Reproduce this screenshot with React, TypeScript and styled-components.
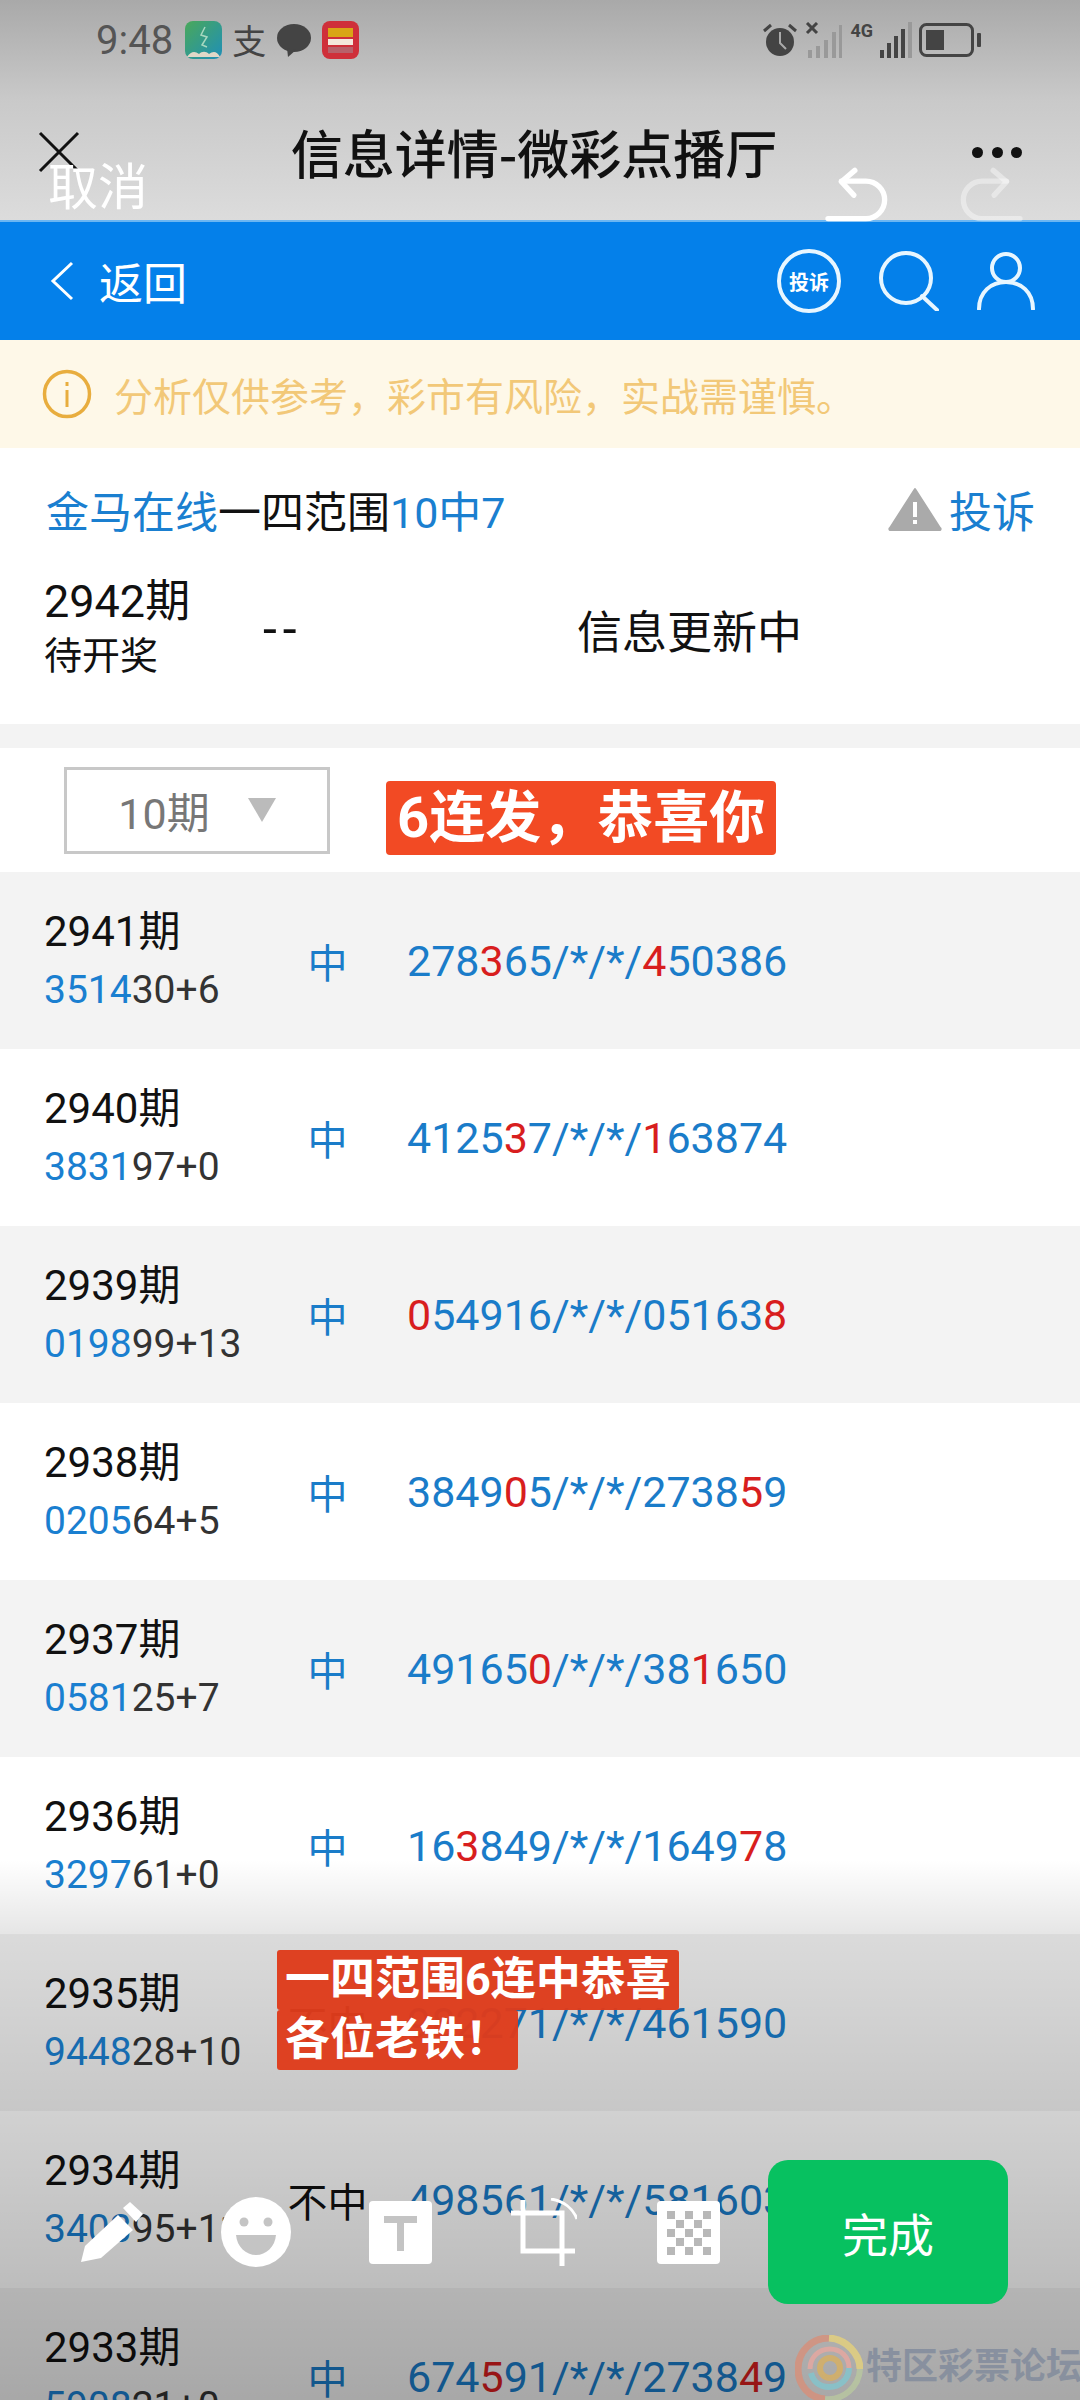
import React from 'react';
import styled, { createGlobalStyle } from 'styled-components';

const cjk = '"Noto Sans CJK SC", sans-serif';
const mixed = 'Roboto, "Noto Sans CJK SC", sans-serif';

const GlobalStyle = createGlobalStyle`
  html, body {
    margin: 0;
    padding: 0;
    width: 1080px;
    height: 2400px;
    overflow: hidden;
    background: #fff;
  }
  * { box-sizing: border-box; }
`;

const Page = styled.div`
  position: relative;
  width: 1080px;
  height: 2400px;
  overflow: hidden;
  font-family: ${mixed};
  color: #111;
`;

const TopBar = styled.div`
  height: 220px;
  background: linear-gradient(#a9a9a9, #c9c9c9 45%, #dcdcdc);
`;

const StatusBar = styled.div`
  height: 80px;
  padding: 0 97px 0 96px;
  display: flex;
  align-items: center;
  justify-content: space-between;
`;

const StatusGroup = styled.div<{ $gap: number }>`
  display: flex;
  align-items: center;
  gap: ${(p) => p.$gap}px;
`;

const Time = styled.span`
  font-family: Roboto, sans-serif;
  font-size: 40px;
  color: #555;
  margin-right: 2px;
`;

const PayGlyph = styled.span`
  font-family: ${cjk};
  font-size: 34px;
  color: #444;
  line-height: 40px;
`;

const FourG = styled.div`
  display: flex;
  flex-direction: column;
  font-family: Roboto, sans-serif;
  font-size: 18px;
  font-weight: 700;
  line-height: 20px;
  color: #444;
  height: 38px;
`;

const TitleRow = styled.div`
  height: 84px;
  margin-top: 30px;
  padding: 0 58px 0 38px;
  display: grid;
  grid-template-columns: 58px 1fr 50px;
  align-items: center;
`;

const PageTitle = styled.div`
  text-align: center;
  font-family: ${cjk};
  font-size: 52px;
  font-weight: 500;
  line-height: 84px;
  color: #111;
  white-space: nowrap;
`;

const Dots = styled.div`
  display: flex;
  justify-content: space-between;
  span {
    width: 11px;
    height: 11px;
    border-radius: 50%;
    background: #111;
  }
`;

const NavBar = styled.div`
  height: 120px;
  background: #0480ea;
  border-top: 2px solid #6cb6f2;
  display: flex;
  align-items: center;
  padding: 0 45px 0 50px;
  color: #fff;
`;

const BackLabel = styled.span`
  font-family: ${cjk};
  font-size: 44px;
  margin-left: 25px;
`;

const NavIcons = styled.div`
  margin-left: auto;
  display: flex;
  align-items: center;
  gap: 38px;
`;

const ComplainRound = styled.div`
  width: 64px;
  height: 64px;
  border: 4px solid #e8f6ff;
  border-radius: 50%;
  display: flex;
  align-items: center;
  justify-content: center;
  font-family: ${cjk};
  font-size: 20px;
  font-weight: 700;
  white-space: nowrap;
`;

const Notice = styled.div`
  height: 108px;
  background: #fef8e8;
  padding-left: 42px;
  display: flex;
  align-items: center;
  gap: 22px;
  font-family: ${cjk};
  font-size: 39px;
  color: #f2c878;
`;

const InfoHead = styled.div`
  height: 122px;
  padding: 0 45px 0 46px;
  display: flex;
  align-items: center;
  justify-content: space-between;
  font-size: 43px;
`;

const Blue = styled.span`
  color: #1a7fd0;
`;

const Red = styled.span`
  color: #d81e1e;
`;

const Report = styled.div`
  display: flex;
  align-items: center;
  gap: 7px;
  color: #1a7fd0;
`;

const CurrentRow = styled.div`
  height: 154px;
  padding: 0 0 36px 44px;
  display: grid;
  grid-template-columns: 219px 314px auto;
  align-items: center;
  justify-content: start;
`;

const Issue = styled.div<{ $size: number }>`
  font-size: ${(p) => p.$size}px;
  line-height: 54px;
  white-space: nowrap;
`;

const Dash = styled.div`
  font-size: 50px;
  letter-spacing: 6px;
`;

const Pending = styled.div`
  font-family: ${cjk};
  font-size: 45px;
`;

const SelectRow = styled.div`
  height: 148px;
  border-top: 24px solid #f3f3f3;
  padding: 0 0 0 64px;
  display: flex;
  align-items: center;
  gap: 56px;
`;

const SelectBox = styled.div`
  width: 266px;
  height: 87px;
  border: 3px solid #c8c8c8;
  display: flex;
  align-items: center;
  justify-content: center;
  gap: 38px;
  font-size: 43px;
  color: #777;
`;

const Caret = styled.span`
  width: 0;
  height: 0;
  border-left: 14px solid transparent;
  border-right: 14px solid transparent;
  border-top: 24px solid #bbb;
`;

const StreakBadge = styled.div`
  height: 74px;
  margin-top: 16px;
  padding: 0 11px;
  background: #f24a24;
  border-radius: 4px;
  color: #fff;
  font-size: 56px;
  font-weight: 700;
  line-height: 74px;
  white-space: nowrap;
`;

const Row = styled.div<{ $shaded: boolean }>`
  height: 177px;
  padding-left: 44px;
  display: grid;
  grid-template-columns: 221px 125px 1fr;
  align-items: center;
  background: ${(p) => (p.$shaded ? '#f3f3f3' : '#fff')};
`;

const Period = styled.div`
  line-height: 58px;
  white-space: nowrap;
`;

const PeriodName = styled.div`
  font-size: 42px;
  color: #111;
`;

const Draw = styled.div`
  font-size: 39px;
  color: #333;
`;

const Verdict = styled.div<{ $hit: boolean }>`
  text-align: center;
  font-family: ${cjk};
  font-size: 40px;
  color: ${(p) => (p.$hit ? '#1a7cc9' : '#111')};
`;

const Numbers = styled.div`
  padding-left: 17px;
  font-size: 43px;
  color: #1a7cc9;
  white-space: nowrap;
`;

const BottomShade = styled.div`
  position: absolute;
  left: 0;
  right: 0;
  top: 1860px;
  bottom: 0;
  background: linear-gradient(rgba(0, 0, 0, 0), rgba(0, 0, 0, 0.1) 14%, rgba(0, 0, 0, 0.31));
`;

const EditorTop = styled.div`
  position: absolute;
  top: 155px;
  left: 48px;
  right: 55px;
  display: flex;
  align-items: center;
  gap: 68px;
`;

const Cancel = styled.span`
  margin-right: auto;
  margin-bottom: 22px;
  font-family: ${cjk};
  font-size: 50px;
  line-height: 57px;
  color: #fff;
`;

const Sticker = styled.div`
  position: absolute;
  left: 277px;
  top: 1950px;
  display: flex;
  flex-direction: column;
  align-items: flex-start;
`;

const StickerLine = styled.div`
  padding: 0 8px;
  background: rgba(222, 60, 28, 0.97);
  color: #fff;
  font-size: 45px;
  font-weight: 700;
  line-height: 60px;
  border-radius: 3px;
  white-space: nowrap;
`;

const EditorBar = styled.div`
  position: absolute;
  left: 40px;
  top: 2160px;
  display: flex;
  align-items: center;
`;

const ToolSlot = styled.div`
  width: 144px;
  display: flex;
  justify-content: center;
`;

const DoneButton = styled.div`
  margin-left: 8px;
  width: 240px;
  height: 144px;
  border-radius: 20px;
  background: #07c160;
  color: #fff;
  display: flex;
  align-items: center;
  justify-content: center;
  font-family: ${cjk};
  font-size: 46px;
`;

const Watermark = styled.div`
  position: absolute;
  left: 795px;
  top: 2335px;
  display: flex;
  align-items: center;
  gap: 3px;
  opacity: 0.8;
`;

const WatermarkText = styled.span`
  margin-top: -10px;
  font-family: ${cjk};
  font-size: 36px;
  font-weight: 700;
  color: #808a9c;
  white-space: nowrap;
`;

type RowData = { name: string; head: string; tail: string; hit: boolean; nums: string };

// [x] marks a digit that is shown in red
const rows: RowData[] = [
  { name: '2941期', head: '3514', tail: '30+6', hit: true, nums: '278[3]65/*/*/[4]50386' },
  { name: '2940期', head: '3831', tail: '97+0', hit: true, nums: '4125[3]7/*/*/[1]63874' },
  { name: '2939期', head: '0198', tail: '99+13', hit: true, nums: '[0]54916/*/*/05163[8]' },
  { name: '2938期', head: '0205', tail: '64+5', hit: true, nums: '3849[0]5/*/*/2738[5]9' },
  { name: '2937期', head: '0581', tail: '25+7', hit: true, nums: '49165[0]/*/*/38[1]650' },
  { name: '2936期', head: '3297', tail: '61+0', hit: true, nums: '16[3]849/*/*/1649[7]8' },
  { name: '2935期', head: '9448', tail: '28+10', hit: false, nums: '982271/*/*/461590' },
  { name: '2934期', head: '3403', tail: '95+11', hit: false, nums: '498561/*/*/581603' },
  { name: '2933期', head: '5908', tail: '21+0', hit: true, nums: '674[5]91/*/*/2738[4]9' },
];

const NumberText = ({ value }: { value: string }) => (
  <>
    {value.split(/(\[.\])/).map((part, i) =>
      part.startsWith('[') ? <Red key={i}>{part[1]}</Red> : <span key={i}>{part}</span>
    )}
  </>
);

const SignalBars = ({ dark, width }: { dark: number; width: number }) => (
  <svg width={width} height="36" viewBox={`0 0 ${width} 36`}>
    {[0, 1, 2, 3, 4].map((i) => (
      <rect
        key={i}
        x={i * 7}
        y={28 - i * 7}
        width="4"
        height={8 + i * 7}
        fill={i < dark ? '#444' : '#999'}
      />
    ))}
  </svg>
);

const UndoIcon = ({ color, flip }: { color: string; flip?: boolean }) => (
  <svg width="67" height="57" viewBox="190 105 200 170">
    <g
      fill="none"
      stroke={color}
      strokeWidth="16"
      strokeLinecap="round"
      strokeLinejoin="round"
      transform={flip ? 'matrix(-1 0 0 1 580 0)' : undefined}
    >
      <path d="M285 118L245 152L282 192" />
      <path d="M245 150H318A56 56 0 0 1 318 262H205" />
    </g>
  </svg>
);

const checkerCells = [0, 1, 2, 3, 4].flatMap((r) =>
  [0, 1, 2, 3, 4].filter((c) => (r + c) % 2 === 0).map((c) => ({ r, c }))
);

const PenTool = () => (
  <svg width="66" height="64" viewBox="0 0 66 64">
    <path d="M2 62L6 46L39 15L54 30L22 58Z" fill="#fff" />
    <path d="M44 8L51 2L64 14L57 22Z" fill="#fff" />
  </svg>
);

const SmileTool = () => (
  <svg width="70" height="70" viewBox="0 0 70 70">
    <circle cx="35" cy="35" r="35" fill="#fff" />
    <circle cx="23" cy="25" r="4.5" fill="#c4c4c4" />
    <circle cx="47" cy="25" r="4.5" fill="#c4c4c4" />
    <path d="M15 38H55C54 50 45 58 35 58C25 58 16 50 15 38Z" fill="#c4c4c4" />
  </svg>
);

const TextTool = () => (
  <svg width="63" height="63" viewBox="0 0 63 63">
    <rect width="63" height="63" rx="4" fill="#fff" />
    <path d="M15 15H48V22H35V50H28V22H15Z" fill="#c4c4c4" />
  </svg>
);

const CropTool = () => (
  <svg width="66" height="68" viewBox="0 0 66 68">
    <g fill="none" stroke="#fff" strokeWidth="5">
      <path d="M0 15H51V68" />
      <path d="M12 2V53H64" />
      <path d="M40 1C52 3 62 10 66 21" strokeWidth="3" />
    </g>
  </svg>
);

const MosaicTool = () => (
  <svg width="63" height="63" viewBox="0 0 63 63">
    <rect width="63" height="63" rx="4" fill="#fff" />
    {checkerCells.map(({ r, c }) => (
      <rect key={`${r}-${c}`} x={10 + c * 9} y={10 + r * 9} width="8" height="8" fill="#b8b8b8" />
    ))}
  </svg>
);

const Swirl = () => (
  <svg width="68" height="66" viewBox="0 0 68 66" fill="none">
    <path d="M34 3C16 3 3 17 3 34C3 50 14 63 30 64" stroke="#d8907a" strokeWidth="7" />
    <path d="M30 64C48 66 64 52 65 34" stroke="#b9c8a0" strokeWidth="6" />
    <path d="M65 34C65 20 52 4 34 3" stroke="#e6d27c" strokeWidth="7" />
    <path d="M15 34C15 22 24 14 35 14C46 14 54 22 54 33" stroke="#e8a8a0" strokeWidth="5" />
    <path d="M54 33C54 44 45 52 34 52C24 52 18 46 16 38" stroke="#82c6cf" strokeWidth="6" />
    <circle cx="35" cy="33" r="10" stroke="#d8b060" strokeWidth="6" />
  </svg>
);

const StatusLeft = () => (
  <StatusGroup $gap={10}>
    <Time>9:48</Time>
    <svg width="37" height="38" viewBox="0 0 37 38">
      <defs>
        <linearGradient id="appFill" x1="0" y1="0" x2="1" y2="1">
          <stop offset="0" stopColor="#4aa85a" />
          <stop offset="1" stopColor="#1f8fb8" />
        </linearGradient>
      </defs>
      <rect width="37" height="38" rx="8" fill="url(#appFill)" />
      <path d="M20 6l-4 8 6 2-5 8 5 2" fill="none" stroke="#a8d8c0" strokeWidth="1.5" />
      <path d="M2 36c4-6 8-6 12-3 3-3 7-3 10 0 4-3 8-3 11 3z" fill="#e0d8c8" />
    </svg>
    <PayGlyph>支</PayGlyph>
    <svg width="36" height="36" viewBox="0 0 36 36">
      <ellipse cx="18" cy="16" rx="17" ry="14" fill="#444" />
      <path d="M11 26l1 9 8-7z" fill="#444" />
    </svg>
    <svg width="37" height="38" viewBox="0 0 37 38">
      <rect width="37" height="38" rx="8" fill="#cf2f3a" />
      <rect x="6" y="7" width="25" height="9" fill="#d9a516" />
      <rect x="6" y="18" width="25" height="6" fill="#f4e8dc" />
      <rect x="6" y="26" width="25" height="6" fill="#b8606a" />
    </svg>
  </StatusGroup>
);

const StatusRight = () => (
  <StatusGroup $gap={7}>
    <svg width="36" height="36" viewBox="0 0 36 36">
      <circle cx="18" cy="20" r="14" fill="#444" />
      <path d="M18 10v11l6 6" fill="none" stroke="#aaa" strokeWidth="2" />
      <path d="M2 9l7-6M34 9l-7-6" stroke="#444" strokeWidth="3" />
    </svg>
    <svg width="38" height="36" viewBox="0 0 38 36">
      <path d="M2 1l10 10M12 1L2 11" stroke="#444" strokeWidth="3" />
      <g fill="#999">
        <rect x="3" y="28" width="4" height="8" />
        <rect x="11" y="24" width="4" height="12" />
        <rect x="19" y="18" width="4" height="18" />
        <rect x="27" y="10" width="4" height="26" />
        <rect x="34" y="3" width="3" height="33" />
      </g>
    </svg>
    <FourG>4G</FourG>
    <SignalBars dark={4} width={32} />
    <svg width="64" height="34" viewBox="0 0 64 34">
      <rect x="1.5" y="1.5" width="52" height="31" rx="6" fill="none" stroke="#444" strokeWidth="3" />
      <rect x="7" y="7" width="18" height="20" fill="#444" />
      <rect x="58" y="10" width="4" height="14" rx="1" fill="#444" />
    </svg>
  </StatusGroup>
);

export default function App() {
  return (
    <Page>
      <GlobalStyle />
      <TopBar>
        <StatusBar>
          <StatusLeft />
          <StatusRight />
        </StatusBar>
        <TitleRow>
          <svg width="42" height="42" viewBox="0 0 42 42">
            <path d="M2 2L40 40M40 2L2 40" stroke="#111" strokeWidth="3" />
          </svg>
          <PageTitle>信息详情-微彩点播厅</PageTitle>
          <Dots>
            <span />
            <span />
            <span />
          </Dots>
        </TitleRow>
      </TopBar>

      <NavBar>
        <svg width="24" height="40" viewBox="0 0 24 40">
          <path d="M22 2L3 20L22 38" fill="none" stroke="#fff" strokeWidth="3" />
        </svg>
        <BackLabel>返回</BackLabel>
        <NavIcons>
          <ComplainRound>投诉</ComplainRound>
          <svg width="60" height="60" viewBox="0 0 60 60" fill="none" stroke="#e8f6ff" strokeWidth="4">
            <circle cx="27" cy="27" r="25" />
            <path d="M43 45L58 59" strokeLinecap="round" />
          </svg>
          <svg width="58" height="58" viewBox="0 0 58 58" fill="none" stroke="#e8f6ff" strokeWidth="4">
            <circle cx="29" cy="16" r="14" />
            <path d="M2 57C2 40 14 30 29 30C44 30 56 40 56 57" strokeLinecap="round" />
          </svg>
        </NavIcons>
      </NavBar>

      <Notice>
        <svg width="50" height="50" viewBox="0 0 50 50">
          <circle cx="25" cy="25" r="22.5" fill="none" stroke="#e8ad3e" strokeWidth="3.5" />
          <rect x="23.5" y="13" width="3" height="4" fill="#e8ad3e" />
          <rect x="23.5" y="21" width="3" height="17" fill="#e8ad3e" />
        </svg>
        分析仅供参考，彩市有风险，实战需谨慎。
      </Notice>

      <InfoHead>
        <div>
          <Blue>金马在线</Blue>一四范围<Blue>10中7</Blue>
        </div>
        <Report>
          <svg width="54" height="44" viewBox="0 0 54 44">
            <path d="M27 2L52 41a1 1 0 0 1-1 2H3a1 1 0 0 1-1-2Z" fill="#aaa" stroke="#aaa" strokeLinejoin="round" strokeWidth="2" />
            <rect x="25" y="15" width="4" height="15" fill="#fff" />
            <rect x="25" y="33" width="4" height="4" fill="#fff" />
          </svg>
          投诉
        </Report>
      </InfoHead>

      <CurrentRow>
        <div>
          <Issue $size={45}>2942期</Issue>
          <Issue $size={38}>待开奖</Issue>
        </div>
        <Dash>--</Dash>
        <Pending>信息更新中</Pending>
      </CurrentRow>

      <SelectRow>
        <SelectBox>
          10期
          <Caret />
        </SelectBox>
        <StreakBadge>6连发，恭喜你</StreakBadge>
      </SelectRow>

      {rows.map((row, i) => (
        <Row key={row.name} $shaded={i % 2 === 0}>
          <Period>
            <PeriodName>{row.name}</PeriodName>
            <Draw>
              <Blue>{row.head}</Blue>
              {row.tail}
            </Draw>
          </Period>
          <Verdict $hit={row.hit}>{row.hit ? '中' : '不中'}</Verdict>
          <Numbers>
            <NumberText value={row.nums} />
          </Numbers>
        </Row>
      ))}

      <BottomShade />

      <EditorTop>
        <Cancel>取消</Cancel>
        <UndoIcon color="#fff" />
        <UndoIcon color="rgba(255,255,255,0.4)" flip />
      </EditorTop>

      <Sticker>
        <StickerLine>一四范围6连中恭喜</StickerLine>
        <StickerLine>各位老铁！</StickerLine>
      </Sticker>

      <EditorBar>
        <ToolSlot>
          <PenTool />
        </ToolSlot>
        <ToolSlot>
          <SmileTool />
        </ToolSlot>
        <ToolSlot>
          <TextTool />
        </ToolSlot>
        <ToolSlot>
          <CropTool />
        </ToolSlot>
        <ToolSlot>
          <MosaicTool />
        </ToolSlot>
        <DoneButton>完成</DoneButton>
      </EditorBar>

      <Watermark>
        <Swirl />
        <WatermarkText>特区彩票论坛</WatermarkText>
      </Watermark>
    </Page>
  );
}
